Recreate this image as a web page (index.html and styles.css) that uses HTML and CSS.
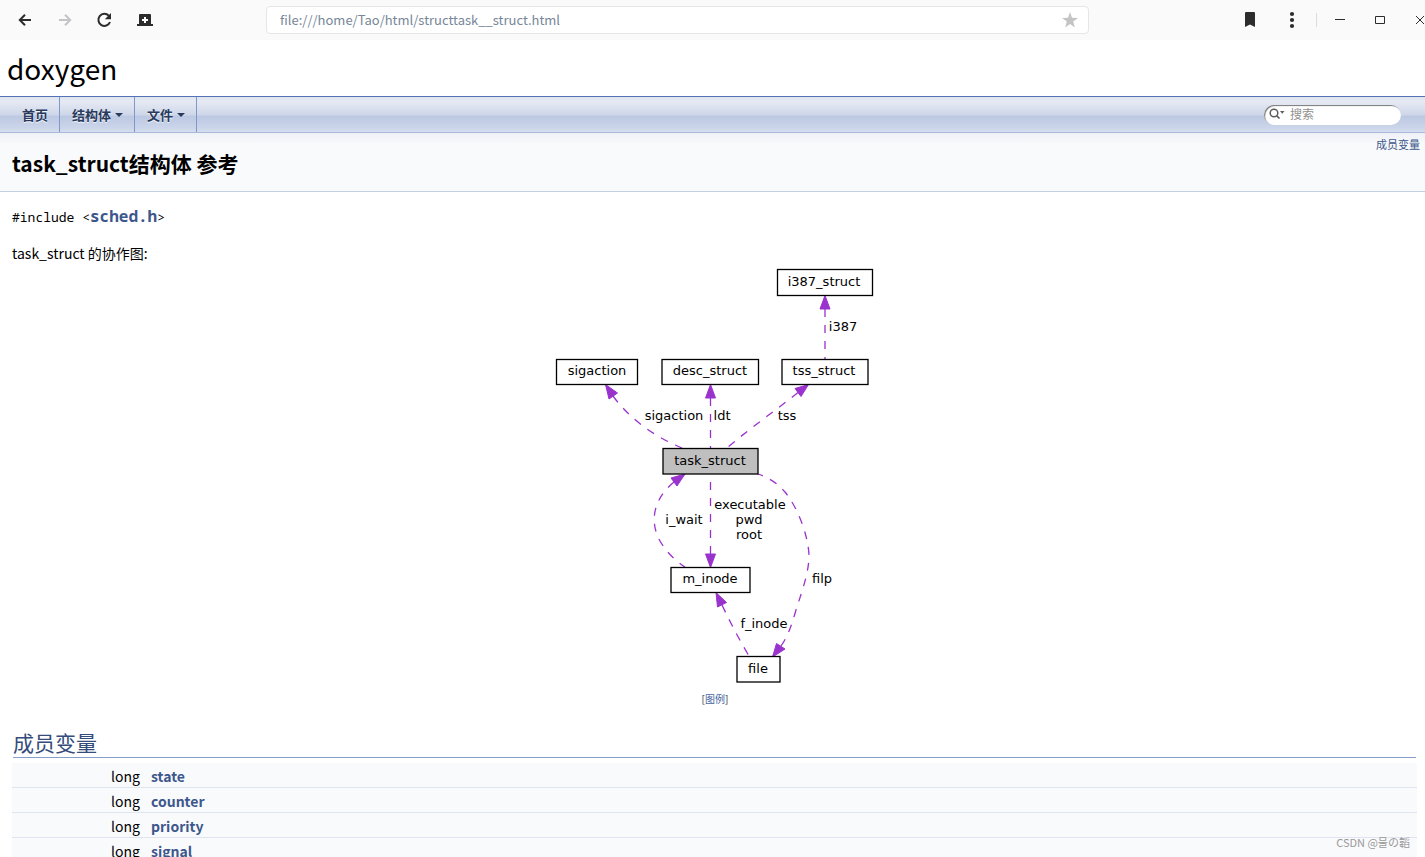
FILE: index.html
```html
<!DOCTYPE html>
<html lang="zh-CN">
<head>
<meta charset="utf-8">
<title>task_struct结构体 参考</title>
<link rel="stylesheet" href="styles.css">
</head>
<body>
<header class="browser">
  <div class="nav-buttons">
    <button class="tool" aria-label="后退"><svg width="20" height="20" viewBox="0 0 20 20"><path d="M16 10H5M10 4.800L4.800 10L10 15.200" fill="none" stroke="#2c2c2c" stroke-width="2"/></svg></button>
    <button class="tool" aria-label="前进"><svg width="20" height="20" viewBox="0 0 20 20"><path d="M4 10H15M10 4.800L15.200 10L10 15.200" fill="none" stroke="#c3c4c9" stroke-width="2"/></svg></button>
    <button class="tool" aria-label="刷新"><svg width="20" height="20" viewBox="0 0 20 20"><path d="M14.800 5.800A6 6 0 1 0 16 12" fill="none" stroke="#2c2c2c" stroke-width="2"/><path d="M17 3V9.200H10.800Z" fill="#2c2c2c"/></svg></button>
    <button class="tool" aria-label="恢复"><svg width="20" height="20" viewBox="0 0 20 20"><path d="M4 5Q4 4 5 4H15Q16 4 16 5V14H18V16H2V14H4Z" fill="#2c2c2c"/><path d="M10 7V13M7 10H13" stroke="#fff" stroke-width="2"/></svg></button>
  </div>
  <div class="address">
    <input class="url" type="text" aria-label="地址" value="file:///home/Tao/html/structtask__struct.html">
    <button class="star" aria-label="收藏"><svg width="18" height="18" viewBox="0 0 18 18"><path d="M9 1L11 6.700L17 6.900L12.200 10.500L13.900 16.500L9 13L4.100 16.500L5.800 10.500L1 6.900L7 6.700Z" fill="#c4c4c4"/></svg></button>
  </div>
  <div class="window-buttons">
    <button class="tool bookmark" aria-label="书签"><svg width="20" height="20" viewBox="0 0 20 20"><path d="M5 3Q5 2 6 2H14Q15 2 15 3V17L10 14.500L5 17Z" fill="#2c2c2c"/></svg></button>
    <button class="tool" aria-label="菜单"><svg width="20" height="20" viewBox="0 0 20 20" fill="#2c2c2c"><circle cx="10" cy="4" r="2.100"/><circle cx="10" cy="10" r="2.100"/><circle cx="10" cy="16" r="2.100"/></svg></button>
    <span class="divider"></span>
    <button class="tool" aria-label="最小化"><svg width="20" height="20" viewBox="0 0 20 20"><path d="M5 9.500H15" stroke="#2c2c2c"/></svg></button>
    <button class="tool" aria-label="最大化"><svg width="20" height="20" viewBox="0 0 20 20"><path d="M5.500 6.500H14.500V13.500H5.500Z" fill="none" stroke="#2c2c2c"/></svg></button>
    <button class="tool" aria-label="关闭"><svg width="20" height="20" viewBox="0 0 20 20"><path d="M6 6L14 14M14 6L6 14" stroke="#2c2c2c"/></svg></button>
  </div>
</header>

<div class="page">
  <div class="project">doxygen</div>
  <nav class="tabs">
    <a class="tab" href="#">首页</a>
    <a class="tab" href="#">结构体<span class="caret"></span></a>
    <a class="tab" href="#">文件<span class="caret"></span></a>
    <div class="search">
      <svg class="lens" width="16" height="12" viewBox="0 0 16 12"><circle cx="5" cy="5" r="3.800" fill="none" stroke="#5c5c5c" stroke-width="1.500"/><path d="M7.800 7.800L10.500 10.500" stroke="#5c5c5c" stroke-width="1.700"/><path d="M11 3H15.500L13.250 5.800Z" fill="#5c5c5c"/></svg>
      <input class="query" type="text" aria-label="搜索" placeholder="搜索">
    </div>
  </nav>
  <div class="header">
    <h1 class="title">task_struct结构体 参考</h1>
    <a class="summary" href="#members">成员变量</a>
  </div>
  <main class="contents">
    <p class="include"><code>#include &lt;<a class="file" href="#">sched.h</a>&gt;</code></p>
    <p class="caption">task_struct 的协作图:</p>
    <div class="graph">
      <svg width="322" height="416" viewBox="554 268 322 416" role="img" aria-label="task_struct 的协作图">
        <g class="edges">
          <path d="M825 309V359"/>
          <path d="M613 396C629 418 653 436 682 448"/>
          <path d="M710.500 398V448"/>
          <path d="M798 392.500C775 411 750 428 727 448"/>
          <path d="M674 482C652 500 650 523 660 541C667 553 676 561 685 567"/>
          <path d="M710.500 554V474"/>
          <path d="M781 646C788 636 792 624 796 610C803 588 809 572 809 555C808 535 798 508 785 492C778 484 770 478 758 474"/>
          <path d="M722 605C731 624 739 639 749 656"/>
        </g>
        <g class="heads">
          <path d="M825 295.500L830 309H820Z"/>
          <path d="M605.500 384.500L617.500 393L609 399Z"/>
          <path d="M710.500 384.500L715.500 398H705.500Z"/>
          <path d="M808.500 384.500L801 396.500L795 388.500Z"/>
          <path d="M685 474L677 486L671 478Z"/>
          <path d="M710.500 567.500L705.500 554H715.500Z"/>
          <path d="M772.500 657L776.500 643.500L785 649Z"/>
          <path d="M716 592.500L726.500 602.500L717.500 607Z"/>
        </g>
        <g class="nodes">
          <rect x="777.500" y="269.500" width="95" height="26"/>
          <rect x="556.500" y="359.500" width="81" height="25"/>
          <rect x="662" y="359.500" width="96.500" height="25"/>
          <rect x="782" y="359.500" width="86" height="25"/>
          <rect class="current" x="663" y="448.500" width="95" height="25.500"/>
          <rect x="671" y="567.500" width="79" height="25"/>
          <rect x="737" y="656.500" width="43" height="25.500"/>
        </g>
        <g class="labels">
          <text x="824" y="286">i387_struct</text>
          <text x="843" y="331">i387</text>
          <text x="597" y="375">sigaction</text>
          <text x="710" y="375">desc_struct</text>
          <text x="824" y="375">tss_struct</text>
          <text x="674" y="420">sigaction</text>
          <text x="722" y="420">ldt</text>
          <text x="787" y="420">tss</text>
          <text x="710" y="465">task_struct</text>
          <text x="750" y="509">executable</text>
          <text x="749" y="524">pwd</text>
          <text x="749" y="539">root</text>
          <text x="684" y="524">i_wait</text>
          <text x="710" y="583">m_inode</text>
          <text x="822" y="583">filp</text>
          <text x="764" y="628">f_inode</text>
          <text x="758" y="673">file</text>
        </g>
      </svg>
      <div class="legend">[<a href="#">图例</a>]</div>
    </div>
    <h2 class="section" id="members">成员变量</h2>
    <table class="members">
      <tr><td class="type">long</td><td><a href="#">state</a></td></tr>
      <tr><td class="type">long</td><td><a href="#">counter</a></td></tr>
      <tr><td class="type">long</td><td><a href="#">priority</a></td></tr>
      <tr><td class="type">long</td><td><a href="#">signal</a></td></tr>
    </table>
  </main>
</div>
<div class="watermark">CSDN @물の韜</div>
</body>
</html>
```

FILE: styles.css
```css
* { box-sizing: border-box; }
body {
  margin: 0;
  height: 100vh;
  overflow: hidden;
  display: flex;
  flex-direction: column;
  background: #fff;
  color: #000;
  font: 14px/22px "Noto Sans CJK SC", sans-serif;
}
a { color: #3d578c; text-decoration: none; }
button { border: 0; padding: 0; background: none; display: flex; align-items: center; justify-content: center; }
input { border: 0; padding: 0; background: none; outline: 0; font: inherit; min-width: 0; }

.browser { flex: none; height: 40px; display: flex; align-items: center; background: #fafafa; }
.nav-buttons { width: 266px; flex: none; display: flex; gap: 1px; padding-left: 5px; }
.nav-buttons .tool { width: 40px; height: 40px; }
.nav-buttons .tool:nth-child(2) { width: 37px; }
.address {
  flex: 1;
  max-width: 823px;
  height: 28px;
  display: flex;
  align-items: center;
  padding: 0 9px 0 13px;
  border: 1px solid #e6e6e6;
  border-radius: 4px;
  background: #fff;
}
.url { flex: 1; color: #778699; font-size: 13px; }
.window-buttons { flex: none; width: 336px; margin-left: auto; margin-right: -15px; display: flex; align-items: center; justify-content: flex-end; }
.window-buttons .tool { width: 40px; height: 40px; }
.window-buttons .bookmark { margin-right: 2px; }
.divider { width: 1px; height: 14px; margin: 0 3px 0 4px; background: #ddd; }

.page { flex: 1; min-height: 0; overflow: hidden; }
.project { height: 56px; padding: 4px 7px 0; font-size: 28px; line-height: 49px; }
.tabs {
  height: 37px;
  display: flex;
  align-items: stretch;
  padding: 0 24px 0 10px;
  border-top: 1px solid #5373b4;
  border-bottom: 1px solid #a8b8d9;
  background: linear-gradient(#dde3ef 0, #e6eaf4 4px, #ced6e8 18px, #bcc8e2 19px, #cbd5ea 31px, #d6deee 35px);
}
.tab {
  display: flex;
  align-items: center;
  padding: 1px 11px 0 12px;
  border-right: 1px solid #7f98c9;
  color: #283a5d;
  font-size: 13px;
  font-weight: bold;
  text-shadow: 0 1px 1px rgba(255, 255, 255, 0.9);
}
.caret { margin-left: 4px; border: 4px solid transparent; border-top-color: #283a5d; border-bottom: 0; }
.search {
  align-self: center;
  width: 137px;
  height: 20px;
  margin-left: auto;
  display: flex;
  align-items: center;
  gap: 5px;
  padding: 0 8px 1px 5px;
  border-radius: 10px;
  background: #fff;
  box-shadow: inset 1px 1px 1px #777;
}
.lens { flex: none; }
.query { flex: 1; font-size: 12px; line-height: 18px; height: 18px; }
.query::placeholder { color: #909090; opacity: 1; }

.header {
  height: 59px;
  display: flex;
  justify-content: space-between;
  padding: 1px 5px 0 12px;
  border-bottom: 1px solid #c4cfe5;
  background: linear-gradient(#eef1f7, #f9fafc 12px);
}
.title { margin: 14px 0 0; font-size: 21px; line-height: 30px; font-weight: bold; }
.summary { font-size: 11px; line-height: 20px; }

.contents { padding: 13px 8px 0 12px; }
.contents p { margin: 0; }
.include code { font: 13px/22px "Noto Sans Mono", "DejaVu Sans Mono", monospace; }
.include { font-size: 14px; line-height: 22px; }
.file { font-size: 16px; font-weight: bold; }
.contents .caption { margin-top: 14px; }
.graph { display: flex; flex-direction: column; align-items: center; margin-top: 4px; }
.legend { font-size: 10px; line-height: 16px; margin-top: 7px; padding-left: 1px; color: #333; }
.legend a { color: #4665a2; }
.edges path { fill: none; stroke: #9a32cd; stroke-width: 1.3px; stroke-dasharray: 8 8; }
.heads path { fill: #9a32cd; stroke: #9a32cd; }
.nodes rect { fill: #fff; stroke: #000; stroke-width: 1.3px; }
.nodes .current { fill: #bfbfbf; }
.labels { font: 13px "DejaVu Sans", sans-serif; text-anchor: middle; }

.section {
  margin: 21px 1px 0;
  padding-bottom: 1px;
  border-bottom: 1px solid #879ecb;
  color: #354c7b;
  font-size: 21px;
  line-height: 28px;
  font-weight: normal;
}
.members { width: 100%; margin-top: 5px; border-spacing: 0; }
.members td { height: 25px; padding: 1px 0 0 11px; border-bottom: 1px solid #dee4f0; background: #f9fafc; }
.members .type { width: 128px; padding-left: 0; text-align: right; }
.members a { font-weight: bold; }
.watermark {
  position: absolute;
  right: 15px;
  bottom: 6px;
  color: #999;
  font: 11px/18px "Noto Sans CJK SC", "Noto Sans CJK KR", sans-serif;
}
```
